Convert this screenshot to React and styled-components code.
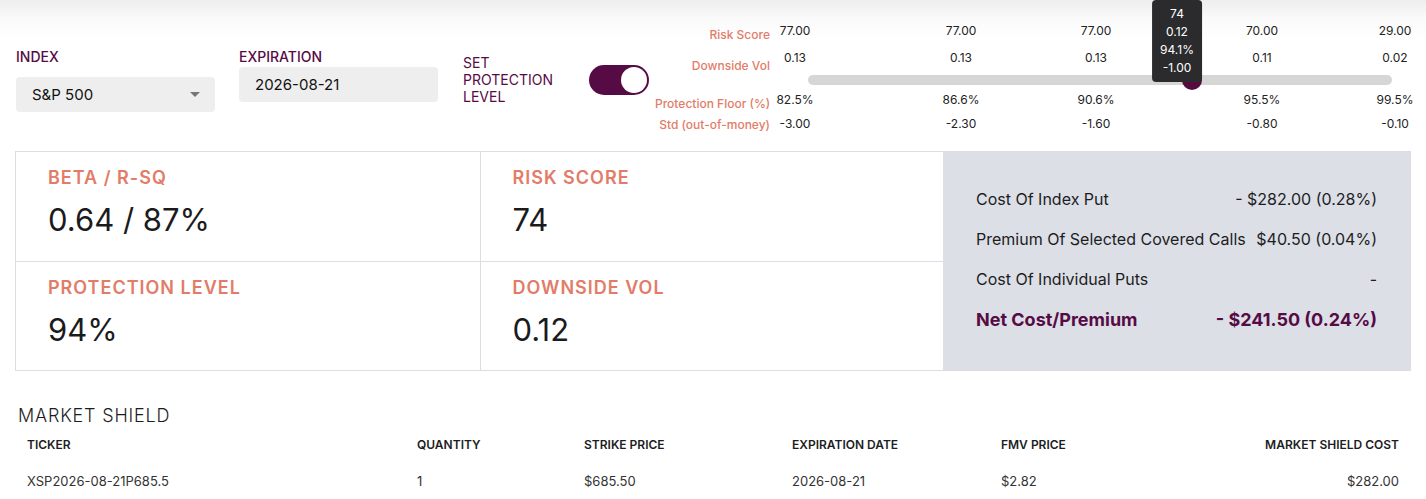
import React from "react";
import styled, { createGlobalStyle } from "styled-components";

const GlobalStyle = createGlobalStyle`
    body {
        margin: 0;
        background: #ffffff;
        font-family: Inter, "Noto Sans", sans-serif;
        color: #1d1d1f;
    }
`;

const PURPLE = "#560b45";
const SALMON = "#e27c68";

const sliderRows = [
    { label: "Risk Score", drop: 4, values: ["77.00", "77.00", "77.00", "70.00", "29.00"] },
    { label: "Downside Vol", drop: 8, values: ["0.13", "0.13", "0.13", "0.11", "0.02"] },
    null,
    { label: "Protection Floor (%)", drop: 4, values: ["82.5%", "86.6%", "90.6%", "95.5%", "99.5%"] },
    { label: "Std (out-of-money)", drop: 1, values: ["-3.00", "-2.30", "-1.60", "-0.80", "-0.10"] },
];

// centres of the slider marks, measured from the start of the value column
const markAt = [25, 191, 326, 492, 625];

const metrics = [
    { label: "BETA / R-SQ", value: "0.64 / 87%" },
    { label: "RISK SCORE", value: "74" },
    { label: "PROTECTION LEVEL", value: "94%" },
    { label: "DOWNSIDE VOL", value: "0.12" },
];

const costs = [
    { label: "Cost Of Index Put", value: "- $282.00 (0.28%)" },
    { label: "Premium Of Selected Covered Calls", value: "$40.50 (0.04%)" },
    { label: "Cost Of Individual Puts", value: "-" },
    { label: "Net Cost/Premium", value: "- $241.50 (0.24%)", total: true },
];

const shieldRows = [
    {
        ticker: "XSP2026-08-21P685.5",
        quantity: "1",
        strike: "$685.50",
        expiration: "2026-08-21",
        fmv: "$2.82",
        cost: "$282.00",
    },
];

const App = () => {
    return (
        <Page>
            <GlobalStyle />
            <TopBar>
                <Field>
                    <FieldLabel>INDEX</FieldLabel>
                    <SelectBox offset={12}>
                        S&amp;P 500
                        <Caret />
                    </SelectBox>
                </Field>
                <Field>
                    <FieldLabel>EXPIRATION</FieldLabel>
                    <SelectBox offset={2} as="div">
                        2026-08-21
                    </SelectBox>
                </Field>
                <ToggleLabel>
                    SET
                    <br />
                    PROTECTION
                    <br />
                    LEVEL
                </ToggleLabel>
                <Toggle>
                    <Knob />
                </Toggle>
                <SliderPanel>
                    {sliderRows.map((row, i) =>
                        row ? (
                            <React.Fragment key={i}>
                                <RowLabel drop={row.drop}>{row.label}</RowLabel>
                                <MarkRow>
                                    {row.values.map((v, j) => (
                                        <Mark key={j} style={{ left: markAt[j] }}>
                                            {v}
                                        </Mark>
                                    ))}
                                </MarkRow>
                            </React.Fragment>
                        ) : (
                            <React.Fragment key={i}>
                                <span />
                                <TrackRow>
                                    <Track />
                                    <Thumb style={{ left: 422 }} />
                                    <Tip style={{ left: 407 }}>
                                        <div>74</div>
                                        <div>0.12</div>
                                        <div>94.1%</div>
                                        <div>-1.00</div>
                                    </Tip>
                                </TrackRow>
                            </React.Fragment>
                        )
                    )}
                </SliderPanel>
            </TopBar>

            <Summary>
                {metrics.map((m, i) => (
                    <MetricCard key={m.label} right={i % 2 === 1} bottom={i > 1}>
                        <MetricLabel>{m.label}</MetricLabel>
                        <MetricValue>{m.value}</MetricValue>
                    </MetricCard>
                ))}
                <CostPanel>
                    {costs.map((c) => (
                        <CostRow key={c.label} total={c.total}>
                            <span>{c.label}</span>
                            <span>{c.value}</span>
                        </CostRow>
                    ))}
                </CostPanel>
            </Summary>

            <Shield>
                <ShieldTitle>MARKET SHIELD</ShieldTitle>
                <ShieldTable>
                    <HeadCell>TICKER</HeadCell>
                    <HeadCell>QUANTITY</HeadCell>
                    <HeadCell>STRIKE PRICE</HeadCell>
                    <HeadCell>EXPIRATION DATE</HeadCell>
                    <HeadCell>FMV PRICE</HeadCell>
                    <HeadCell end>MARKET SHIELD COST</HeadCell>
                    {shieldRows.map((r) => (
                        <React.Fragment key={r.ticker}>
                            <BodyCell>{r.ticker}</BodyCell>
                            <BodyCell>{r.quantity}</BodyCell>
                            <BodyCell>{r.strike}</BodyCell>
                            <BodyCell>{r.expiration}</BodyCell>
                            <BodyCell>{r.fmv}</BodyCell>
                            <BodyCell end>{r.cost}</BodyCell>
                        </React.Fragment>
                    ))}
                </ShieldTable>
            </Shield>
        </Page>
    );
};

const Page = styled.div`
    width: 1426px;
    min-height: 499px;
    background: linear-gradient(to bottom, #eeeef0 0px, #fafafa 18px, #ffffff 40px);
`;

const TopBar = styled.div`
    display: flex;
    align-items: flex-start;
    height: 151px;
    padding-left: 16px;
    box-sizing: border-box;
`;

const Field = styled.div`
    display: flex;
    flex-direction: column;
    width: 199px;
    margin-top: 48px;
    margin-right: 24px;
`;

const FieldLabel = styled.div`
    font-size: 14px;
    line-height: 17px;
    font-weight: 500;
    color: ${PURPLE};
`;

const SelectBox = styled.div`
    position: relative;
    display: flex;
    align-items: center;
    height: 35px;
    margin-top: ${(p) => p.offset}px;
    padding-left: 16px;
    background: #eeeeee;
    border-radius: 4px;
    font-size: 15px;
    color: #111;
`;

const Caret = styled.span`
    position: absolute;
    right: 15px;
    top: 15px;
    width: 0;
    height: 0;
    border-left: 5px solid transparent;
    border-right: 5px solid transparent;
    border-top: 5px solid #767676;
`;

const ToggleLabel = styled.div`
    width: 100px;
    margin: 54px 26px 0 1px;
    font-size: 14px;
    line-height: 17px;
    color: ${PURPLE};
`;

const Toggle = styled.div`
    position: relative;
    width: 60px;
    height: 30px;
    margin-top: 65px;
    border-radius: 15px;
    background: ${PURPLE};
`;

const Knob = styled.div`
    position: absolute;
    right: 2px;
    top: 2px;
    width: 26px;
    height: 26px;
    border-radius: 50%;
    background: #ffffff;
`;

const SliderPanel = styled.div`
    display: grid;
    grid-template-columns: 115px 642px;
    grid-template-rows: 27px 22px 20px 24px 18px;
    margin: 22px 0 0 6px;
`;

const RowLabel = styled.div`
    padding-top: ${(p) => p.drop}px;
    text-align: right;
    font-size: 12px;
    line-height: 18px;
    font-weight: 500;
    color: ${SALMON};
    white-space: nowrap;
`;

const MarkRow = styled.div`
    position: relative;
    height: 18px;
`;

const Mark = styled.span`
    position: absolute;
    top: 0;
    transform: translateX(-50%);
    font-size: 12px;
    line-height: 18px;
    color: #222;
    white-space: nowrap;
`;

const TrackRow = styled.div`
    position: relative;
    height: 18px;
`;

const Track = styled.div`
    position: absolute;
    left: 38px;
    width: 584px;
    top: 4px;
    height: 10px;
    border-radius: 5px;
    background: #d6d6d6;
`;

const Thumb = styled.div`
    position: absolute;
    top: -1px;
    width: 20px;
    height: 20px;
    margin-left: -10px;
    border-radius: 50%;
    background: #550a40;
`;

const Tip = styled.div`
    position: absolute;
    top: -71px;
    transform: translateX(-50%);
    padding: 5px 8px 5px;
    border-radius: 4px;
    background: #2b2b2d;
    color: #ffffff;
    font-size: 12px;
    line-height: 18px;
    text-align: center;
    white-space: nowrap;
    z-index: 2;
`;

const Summary = styled.div`
    display: grid;
    grid-template-columns: 1fr 1fr 467px;
    grid-template-rows: 109px 109px;
    margin: 0 15px;
    border: 1px solid #dcdde3;
`;

const MetricCard = styled.div`
    padding: 15px 32px 0;
    border-left: ${(p) => (p.right ? "1px solid #dcdde3" : "none")};
    border-top: ${(p) => (p.bottom ? "1px solid #dcdde3" : "none")};
`;

const MetricLabel = styled.div`
    font-size: 18px;
    line-height: 22px;
    font-weight: 600;
    letter-spacing: 1px;
    color: ${SALMON};
`;

const MetricValue = styled.div`
    margin-top: 13px;
    font-size: 31px;
    line-height: 36px;
    font-weight: 400;
    color: #1b1b1d;
`;

const CostPanel = styled.div`
    grid-column: 3;
    grid-row: 1 / span 2;
    display: flex;
    flex-direction: column;
    justify-content: center;
    padding: 0 33px 4px;
    background: #dcdfe6;
`;

const CostRow = styled.div`
    display: flex;
    justify-content: space-between;
    align-items: center;
    height: 40px;
    font-size: ${(p) => (p.total ? "18px" : "16px")};
    font-weight: ${(p) => (p.total ? 700 : 400)};
    color: ${(p) => (p.total ? PURPLE : "#1d1d1f")};
`;

const Shield = styled.div`
    padding: 33px 15px 0;
`;

const ShieldTitle = styled.div`
    padding-left: 3px;
    font-size: 18px;
    line-height: 24px;
    font-weight: 300;
    letter-spacing: 0.8px;
    color: #1d1d1f;
`;

const ShieldTable = styled.div`
    display: grid;
    grid-template-columns: 390px 167px 208px 209px 1fr 1fr;
    grid-template-rows: 33px 39px;
    align-items: center;
`;

const HeadCell = styled.div`
    padding: 0 12px;
    font-size: 12px;
    font-weight: 600;
    color: #1d1d1f;
    text-align: ${(p) => (p.end ? "right" : "left")};
    white-space: nowrap;
`;

const BodyCell = styled.div`
    padding: 0 12px;
    font-size: 13px;
    color: #333;
    text-align: ${(p) => (p.end ? "right" : "left")};
`;

export default App;
